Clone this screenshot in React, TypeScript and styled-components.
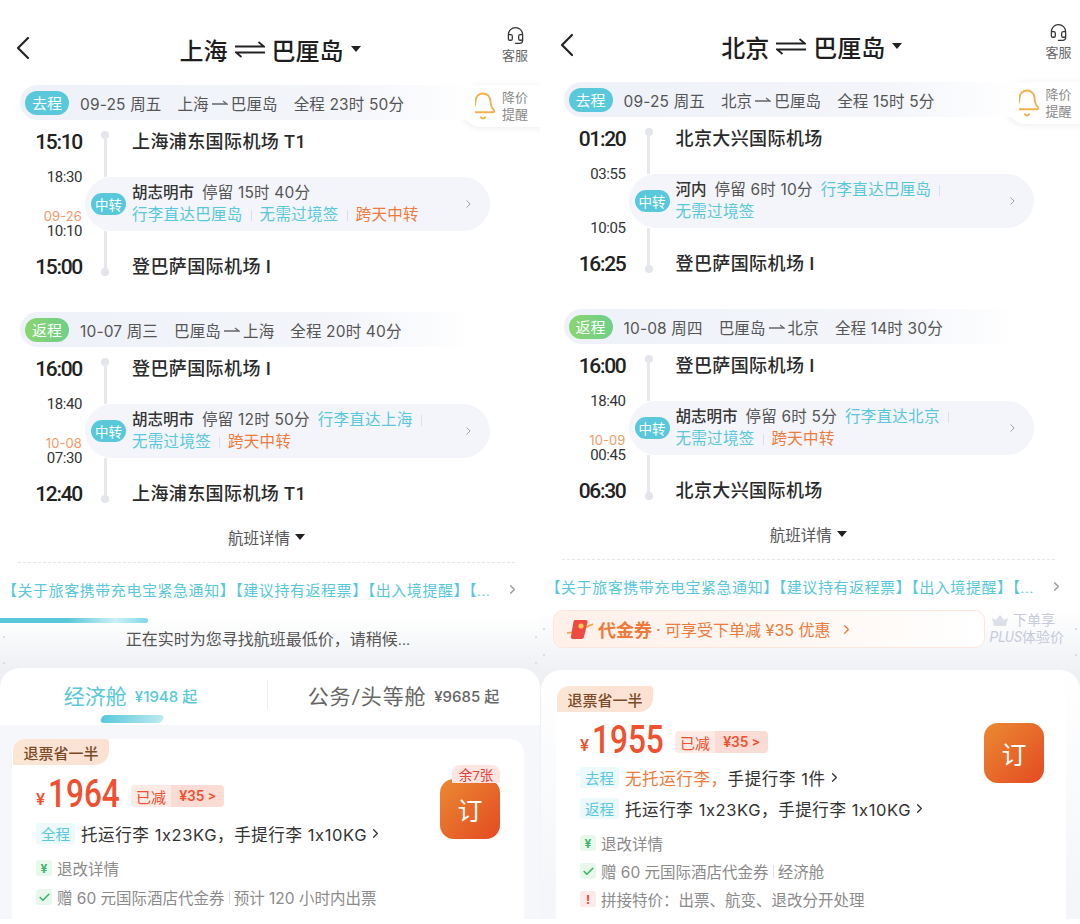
import React from 'react';
import styled, { createGlobalStyle } from 'styled-components';
import { Bell, Check, ChevronLeft, ChevronRight, Headset } from 'lucide-react';

const TEAL = '#58c8da';
const ORANGE = '#ee7a3c';
const RED = '#ee5030';
const WIDE = 'Inter, "Noto Sans CJK SC", sans-serif';

const Global = createGlobalStyle`
  html, body { margin: 0; padding: 0; background: #fff; }
  body { font-family: Roboto, "Noto Sans CJK SC", sans-serif; color: #222; }
`;

const Page = styled.div`
  display: flex;
  width: 1080px;
  height: 919px;
  overflow: hidden;
  background: #fff;
`;

const Screen = styled.div`
  width: 540px;
  height: 919px;
  flex: none;
  overflow: hidden;
  display: flex;
  flex-direction: column;
`;

const Top = styled.div<{ $right?: boolean }>`
  position: relative;
  padding-left: ${p => (p.$right ? 3.5 : 0)}px;
  padding-top: ${p => (p.$right ? 1 : 4)}px;
`;

const Header = styled.div`
  height: 81px;
  position: relative;
  display: flex;
  align-items: center;
  justify-content: center;
  box-sizing: border-box;
`;

const Back = styled.div`
  position: absolute;
  left: 3px;
  top: 24px;
  display: flex;
  color: #222;
`;

const Title = styled.div`
  display: flex;
  align-items: center;
  margin-top: 9px;
  font-size: 24px;
  font-weight: 500;
  color: #1e1e1e;
  gap: 7px;
`;

const Caret = styled.i<{ $size?: number }>`
  display: inline-block;
  width: 0;
  height: 0;
  border-left: ${p => p.$size ?? 5}px solid transparent;
  border-right: ${p => p.$size ?? 5}px solid transparent;
  border-top: ${p => (p.$size ?? 5) + 1}px solid #222;
`;

const Service = styled.div`
  position: absolute;
  left: 502px;
  top: 22px;
  width: 26px;
  display: flex;
  flex-direction: column;
  align-items: center;
  font-size: 13px;
  line-height: 16px;
  color: #666;
  gap: 3px;
`;

const TripList = styled.div`
  position: relative;
`;

const Alert = styled.div`
  position: absolute;
  left: 461px;
  top: 0;
  width: 90px;
  height: 42px;
  padding-left: 7px;
  box-sizing: border-box;
  background: #fff;
  border-radius: 21px 0 0 21px;
  box-shadow: -1px 1px 6px rgba(120, 130, 150, 0.14);
  display: flex;
  align-items: center;
  gap: 4px;
  color: #f3b04f;
`;

const AlertText = styled.div`
  font-size: 13px;
  line-height: 17px;
  color: #8a8a8a;
`;

const Trip = styled.div`
  position: relative;
  margin-bottom: 32px;
  &:last-of-type { margin-bottom: 0; }
`;

const SummaryBar = styled.div`
  margin-left: 20px;
  width: 455px;
  height: 35px;
  box-sizing: border-box;
  padding-left: 5px;
  border-radius: 18px 0 0 18px;
  background: linear-gradient(90deg, #eef1f8 0%, #f3f5fa 70%, #ffffff 100%);
  display: flex;
  align-items: center;
  font-family: ${WIDE};
  font-size: 15.5px;
  letter-spacing: 0.15px;
  color: #555;
  white-space: nowrap;
`;

const Leg = styled.span<{ $back?: boolean }>`
  width: 44px;
  height: 24px;
  border-radius: 12px;
  margin-right: 11px;
  background: ${p => (p.$back ? 'linear-gradient(90deg, #8ad56f, #6fcf8a)' : TEAL)};
  color: #fff;
  font-size: 15px;
  letter-spacing: 0;
  display: flex;
  align-items: center;
  justify-content: center;
`;

const SummaryPart = styled.span`
  margin-right: 16px;
  display: inline-flex;
  align-items: center;
  gap: 3px;
`;

const AirportRow = styled.div<{ $end?: boolean }>`
  display: flex;
  height: ${p => (p.$end ? 46 : 50)}px;
  margin-top: ${p => (p.$end ? 0 : 4)}px;
  align-items: ${p => (p.$end ? 'flex-end' : 'flex-start')};
`;

const Clock = styled.div<{ $end?: boolean }>`
  width: 82px;
  flex: none;
  text-align: right;
  font-size: 21px;
  font-weight: 500;
  letter-spacing: -1.3px;
  line-height: ${p => (p.$end ? 26 : 36)}px;
  color: #222;
`;

const Rail = styled.div<{ $end?: boolean }>`
  width: 46px;
  height: 100%;
  flex: none;
  display: flex;
  flex-direction: ${p => (p.$end ? 'column-reverse' : 'column')};
  align-items: center;
  box-sizing: border-box;
  padding: ${p => (p.$end ? '0 0 4px' : '7px 0 0')};
  &::before {
    content: '';
    width: 8px;
    height: 8px;
    border-radius: 50%;
    background: #e3e5ea;
    flex: none;
  }
  &::after {
    content: '';
    width: 3px;
    flex: 1;
    background: #e6e8ec;
    margin: -3px 0;
  }
`;

const Airport = styled.div<{ $end?: boolean }>`
  margin-left: 4px;
  font-size: 18px;
  font-weight: 500;
  letter-spacing: 0.4px;
  line-height: ${p => (p.$end ? 26 : 36)}px;
  color: #2a2a2a;
`;

const StopRow = styled.div`
  display: flex;
  height: 60px;
  align-items: center;
`;

const StopTimes = styled.div`
  width: 82px;
  height: 70px;
  flex: none;
  display: flex;
  flex-direction: column;
  justify-content: space-between;
  text-align: right;
  font-size: 15px;
  line-height: 16px;
  letter-spacing: -0.4px;
  color: #333;
`;

const StopDate = styled.div`
  font-family: ${WIDE};
  font-size: 13px;
  line-height: 14px;
  letter-spacing: 0.1px;
  color: #f39a68;
`;

const StopPill = styled.div`
  width: 405px;
  height: 54px;
  margin-left: 3px;
  padding-left: 6px;
  box-sizing: border-box;
  border-radius: 27px;
  background: #f4f5fa;
  display: flex;
  align-items: center;
  color: #8f8f8f;
`;

const StopBadge = styled.span`
  width: 35px;
  height: 22px;
  flex: none;
  border-radius: 11px;
  background: ${TEAL};
  color: #fff;
  font-size: 13.5px;
  display: flex;
  align-items: center;
  justify-content: center;
`;

const StopBody = styled.div`
  margin-left: 6px;
  width: 330px;
  flex: none;
  font-size: 15.5px;
  line-height: 22px;
`;

const StopLine = styled.div`
  display: flex;
  align-items: center;
  white-space: nowrap;
  height: 22px;
`;

const City = styled.span`
  font-weight: 500;
  color: #333;
  margin-right: 8px;
`;

const Stay = styled.span`
  font-family: ${WIDE};
  font-size: 15.5px;
  letter-spacing: 0.2px;
  color: #555;
  margin-right: 8px;
`;

const Note = styled.span<{ $warm?: boolean }>`
  color: ${p => (p.$warm ? ORANGE : TEAL)};
  letter-spacing: 0.3px;
`;

const NoteSep = styled.i`
  width: 1px;
  height: 11px;
  margin: 0 8px;
  background: #dcdfe6;
`;

const PillArrow = styled(ChevronRight)`
  margin-left: auto;
  margin-right: 15px;
`;

const FlightDetail = styled.div`
  margin-top: 20px;
  height: 20px;
  display: flex;
  align-items: center;
  justify-content: center;
  gap: 5px;
  padding-right: 7px;
  font-size: 15.5px;
  color: #555;
`;

const Dashed = styled.div`
  margin: 15px 25px 0 18px;
  border-top: 1px dashed #e6e6e6;
`;

const Notice = styled.div`
  margin-top: 16px;
  padding-left: 2px;
  height: 20px;
  display: flex;
  align-items: center;
  font-size: 15px;
  color: ${TEAL};
  white-space: nowrap;
`;

const NoticeText = styled.span`
  width: 500px;
  flex: none;
  letter-spacing: 0.55px;
`;

const NoticeArrow = styled.span`
  color: #999;
  display: flex;
  margin-left: 3px;
`;

const edgeDots = `
  radial-gradient(circle, #dcdfe5 1px, transparent 1.6px) left 1px top 6px / 6px 26px repeat-y,
  radial-gradient(circle, #dcdfe5 1px, transparent 1.6px) right 1px top 6px / 6px 26px repeat-y
`;

const Panel = styled.div<{ $right?: boolean }>`
  flex: 1;
  min-height: 0;
  margin-top: ${p => (p.$right ? 14 : 19)}px;
  padding-left: ${p => (p.$right ? 1 : 0)}px;
  background: ${edgeDots}, linear-gradient(180deg, #ffffff 0, #eef0f4 ${p => (p.$right ? 65 : 50)}px, #f5f6f9 100%);
  display: flex;
  flex-direction: column;
`;

const Progress = styled.div`
  width: 148px;
  height: 5px;
  border-radius: 0 3px 3px 0;
  background: linear-gradient(90deg, #58c8da 0%, #58c8da 45%, #c9f0f5 78%, #7fd9e6 100%);
`;

const Searching = styled.div`
  height: 45px;
  display: flex;
  align-items: flex-start;
  justify-content: center;
  padding: 7px 4px 0 0;
  box-sizing: border-box;
  font-size: 16px;
  line-height: 20px;
  color: #555;
`;

const Tabs = styled.div`
  height: 57px;
  flex: none;
  background: #fff;
  border-radius: 20px 20px 0 0;
  display: flex;
  position: relative;
`;

const Tab = styled.div<{ $on?: boolean }>`
  width: 267px;
  flex: none;
  position: relative;
  display: flex;
  align-items: center;
  justify-content: center;
  gap: 8px;
  height: 54px;
  padding-right: 6px;
  box-sizing: border-box;
  font-size: 21px;
  color: ${p => (p.$on ? TEAL : '#666')};
  & + & {
    border-left: 1px solid #eceef1;
    height: 30px;
    margin-top: 12px;
    padding-right: 0;
    width: 272px;
    letter-spacing: 0.8px;
  }
`;

const TabPrice = styled.span`
  font-family: ${WIDE};
  font-size: 15px;
  font-weight: 500;
  letter-spacing: 0;
`;

const TabBar = styled.i`
  position: absolute;
  left: 101px;
  bottom: -1px;
  width: 62px;
  height: 8px;
  border-radius: 4px;
  transform: skewX(-20deg);
  background: linear-gradient(90deg, #58c8da, #bdeaf1);
`;

const FareArea = styled.div`
  flex: 1;
  background: #f6f7fa;
  padding: 13px 16px 0 12px;
`;

const FareShell = styled.div`
  flex: 1;
  margin-top: 22px;
  border-radius: 20px 20px 0 0;
  background: linear-gradient(180deg, #ffffff 0, #f4f6f9 220px);
  padding: 15px 14px 0 15px;
  display: flex;
`;

const FareCard = styled.div`
  flex: 1;
  height: 100%;
  background: #fff;
  border-radius: 14px 14px 0 0;
  position: relative;
`;

const Perk = styled.div`
  width: 96px;
  height: 26px;
  margin: 1px 0 0 1px;
  border-radius: 12px 3px 14px 0;
  background: linear-gradient(90deg, #fbe6d6, #fce1d3);
  color: #7b4a26;
  font-size: 15px;
  font-weight: 500;
  display: flex;
  align-items: center;
  justify-content: center;
`;

const FareBody = styled.div<{ $right?: boolean }>`
  display: flex;
  justify-content: space-between;
  padding: ${p => (p.$right ? 10 : 11)}px ${p => (p.$right ? 22 : 24)}px 0 24px;
`;

const FareMain = styled.div`
  display: flex;
  flex-direction: column;
`;

const PriceRow = styled.div`
  height: 36px;
  display: flex;
  align-items: center;
  color: ${RED};
`;

const Yen = styled.span`
  font-size: 17px;
  margin: 9px 3px 0 0;
  font-weight: 500;
`;

const Amount = styled.span`
  width: 72px;
  flex: none;
  font-size: 39px;
  line-height: 36px;
  font-weight: 500;
  transform: scaleX(0.81);
  transform-origin: left center;
`;

const Saved = styled.div`
  margin: 4px 0 0 11px;
  height: 22px;
  display: flex;
  font-size: 15px;
  border-radius: 4px;
  overflow: hidden;
`;

const SavedLabel = styled.span`
  width: 40px;
  background: #fdeae5;
  display: flex;
  align-items: center;
  justify-content: center;
`;

const SavedValue = styled.span`
  width: 53px;
  background: #fbdcd5;
  display: flex;
  align-items: center;
  justify-content: center;
  font-weight: 500;
`;

const BagRows = styled.div<{ $right?: boolean }>`
  margin-top: ${p => (p.$right ? 9 : 11)}px;
  display: flex;
  flex-direction: column;
  gap: 10px;
`;

const BagRow = styled.div`
  height: 21px;
  display: flex;
  align-items: center;
  font-family: ${WIDE};
  font-size: 16.5px;
  letter-spacing: 0.6px;
  color: #333;
  white-space: nowrap;
`;

const BagTag = styled.span`
  width: 39px;
  height: 21px;
  margin-right: 6px;
  border-radius: 3px;
  background: #edfafc;
  color: ${TEAL};
  font-size: 14.5px;
  letter-spacing: 0;
  display: flex;
  align-items: center;
  justify-content: center;
`;

const BagArrow = styled(ChevronRight)`
  margin-left: 1px;
`;

const Warm = styled.span`
  color: ${ORANGE};
`;

const Services = styled.div<{ $right?: boolean }>`
  margin-top: 14px;
  display: flex;
  flex-direction: column;
  gap: ${p => (p.$right ? 8 : 9)}px;
`;

const ServiceRow = styled.div`
  height: 20px;
  display: flex;
  align-items: center;
  font-family: ${WIDE};
  font-size: 15.5px;
  color: #8b8b8b;
  white-space: nowrap;
`;

const ServiceMark = styled.span<{ $tone: 'green' | 'red' }>`
  width: 16px;
  height: 16px;
  margin-right: 5px;
  border-radius: 3px;
  background: ${p => (p.$tone === 'green' ? '#e8f8ec' : '#fdeaea')};
  color: ${p => (p.$tone === 'green' ? '#3cb56a' : '#e8433a')};
  font-size: 12px;
  font-weight: 700;
  display: flex;
  align-items: center;
  justify-content: center;
`;

const ServiceSep = styled.i`
  width: 1px;
  height: 13px;
  margin: 0 4px;
  background: #dfe1e6;
`;

const BookBox = styled.div<{ $right?: boolean }>`
  position: relative;
  width: 60px;
  height: 60px;
  margin-top: ${p => (p.$right ? 1 : 3)}px;
  flex: none;
`;

const Book = styled.div`
  width: 60px;
  height: 60px;
  border-radius: 14px;
  background: linear-gradient(135deg, #ea8a32 0%, #e44a22 100%);
  color: #fff;
  font-size: 25px;
  display: flex;
  align-items: center;
  justify-content: center;
`;

const SeatsLeft = styled.span`
  position: absolute;
  top: -14px;
  right: 0;
  width: 48px;
  height: 18px;
  border-radius: 8px 8px 0 0;
  background: #fde6e2;
  color: #e8433a;
  font-size: 13.5px;
  display: flex;
  align-items: center;
  justify-content: center;
`;

const CouponRow = styled.div`
  display: flex;
  align-items: center;
  height: 38px;
  padding-left: 12px;
`;

const Coupon = styled.div`
  width: 432px;
  height: 38px;
  flex: none;
  box-sizing: border-box;
  border: 1px solid #fbe6dd;
  border-radius: 10px;
  background: linear-gradient(90deg, #fff0e9, #fff8f4 60%, #ffffff);
  display: flex;
  align-items: center;
  padding-left: 12px;
  color: ${ORANGE};
  font-family: ${WIDE};
  font-size: 16px;
  white-space: nowrap;
`;

const CouponName = styled.span`
  font-size: 18px;
  font-weight: 700;
  margin: 0 4px 0 4px;
`;

const CouponArrow = styled(ChevronRight)`
  margin-left: 8px;
`;

const PlusNote = styled.div`
  margin-left: 3px;
  width: 76px;
  flex: none;
  color: #c7cad8;
  font-size: 14px;
  line-height: 17px;
  text-align: right;
  white-space: nowrap;
`;

const PlusTop = styled.div`
  display: flex;
  align-items: center;
  justify-content: flex-end;
  gap: 4px;
  padding-right: 9px;
`;

const PlusLabel = styled.em`
  font-style: italic;
`;

type StopNote = { text: string; warm?: boolean; sep?: boolean };

type TripData = {
  back?: boolean;
  date: string;
  from: string;
  to: string;
  total: string;
  depart: string;
  departAirport: string;
  stopIn: string;
  stopDate?: string;
  stopOut: string;
  city: string;
  stay: string;
  first: StopNote[];
  second: StopNote[];
  arrive: string;
  arriveAirport: string;
};

const leftTrips: TripData[] = [
  {
    date: '09-25 周五', from: '上海', to: '巴厘岛', total: '全程 23时 50分',
    depart: '15:10', departAirport: '上海浦东国际机场 T1',
    stopIn: '18:30', stopDate: '09-26', stopOut: '10:10',
    city: '胡志明市', stay: '停留 15时 40分', first: [],
    second: [{ text: '行李直达巴厘岛', sep: true }, { text: '无需过境签', sep: true }, { text: '跨天中转', warm: true }],
    arrive: '15:00', arriveAirport: '登巴萨国际机场 I',
  },
  {
    back: true,
    date: '10-07 周三', from: '巴厘岛', to: '上海', total: '全程 20时 40分',
    depart: '16:00', departAirport: '登巴萨国际机场 I',
    stopIn: '18:40', stopDate: '10-08', stopOut: '07:30',
    city: '胡志明市', stay: '停留 12时 50分', first: [{ text: '行李直达上海', sep: true }],
    second: [{ text: '无需过境签', sep: true }, { text: '跨天中转', warm: true }],
    arrive: '12:40', arriveAirport: '上海浦东国际机场 T1',
  },
];

const rightTrips: TripData[] = [
  {
    date: '09-25 周五', from: '北京', to: '巴厘岛', total: '全程 15时 5分',
    depart: '01:20', departAirport: '北京大兴国际机场',
    stopIn: '03:55', stopOut: '10:05',
    city: '河内', stay: '停留 6时 10分', first: [{ text: '行李直达巴厘岛', sep: true }],
    second: [{ text: '无需过境签' }],
    arrive: '16:25', arriveAirport: '登巴萨国际机场 I',
  },
  {
    back: true,
    date: '10-08 周四', from: '巴厘岛', to: '北京', total: '全程 14时 30分',
    depart: '16:00', departAirport: '登巴萨国际机场 I',
    stopIn: '18:40', stopDate: '10-09', stopOut: '00:45',
    city: '胡志明市', stay: '停留 6时 5分', first: [{ text: '行李直达北京', sep: true }],
    second: [{ text: '无需过境签', sep: true }, { text: '跨天中转', warm: true }],
    arrive: '06:30', arriveAirport: '北京大兴国际机场',
  },
];

const RoundArrows = () => (
  <svg width="30" height="18" viewBox="0 0 30 18" fill="none" stroke="#222" strokeWidth="1.8">
    <path d="M0 6.5h29L23.5 2" />
    <path d="M30 12.5H1l5.5 4.5" />
  </svg>
);

const OneWay = () => (
  <svg width="16" height="8" viewBox="0 0 16 8" fill="none" stroke="#666" strokeWidth="1.3">
    <path d="M0 5h15L11 2" />
  </svg>
);

const CouponIcon = () => (
  <svg width="28" height="24" viewBox="0 0 28 24">
    <path d="M1 16c6 0 18-5 26-9" stroke="#f2a23c" strokeWidth="1.6" fill="none" />
    <path d="M9 3h11c1 0 2 1 1.6 2L18 20c-.3 1-1.2 2-2.4 2H7c-1.5 0-2.4-1-2-2.4L7.4 5C7.7 4 8 3 9 3z" fill="#ee4a44" />
    <circle cx="15" cy="9" r="2.6" fill="#f8c85a" />
  </svg>
);

const Crown = () => (
  <svg width="18" height="13" viewBox="0 0 18 13" fill="#dcdee8">
    <path d="M1 4l4 2 4-5 4 5 4-2-2 8H3z" />
  </svg>
);

const NoteList = ({ notes }: { notes: StopNote[] }) => (
  <>
    {notes.map(n => (
      <React.Fragment key={n.text}>
        <Note $warm={n.warm}>{n.text}</Note>
        {n.sep && <NoteSep />}
      </React.Fragment>
    ))}
  </>
);

const TripBlock = ({ trip }: { trip: TripData }) => (
  <Trip>
    <SummaryBar>
      <Leg $back={trip.back}>{trip.back ? '返程' : '去程'}</Leg>
      <SummaryPart>{trip.date}</SummaryPart>
      <SummaryPart>
        {trip.from}
        <OneWay />
        {trip.to}
      </SummaryPart>
      <SummaryPart>{trip.total}</SummaryPart>
    </SummaryBar>
    <AirportRow>
      <Clock>{trip.depart}</Clock>
      <Rail />
      <Airport>{trip.departAirport}</Airport>
    </AirportRow>
    <StopRow>
      <StopTimes>
        <div>{trip.stopIn}</div>
        <div>
          {trip.stopDate && <StopDate>{trip.stopDate}</StopDate>}
          {trip.stopOut}
        </div>
      </StopTimes>
      <StopPill>
        <StopBadge>中转</StopBadge>
        <StopBody>
          <StopLine>
            <City>{trip.city}</City>
            <Stay>{trip.stay}</Stay>
            <NoteList notes={trip.first} />
          </StopLine>
          <StopLine>
            <NoteList notes={trip.second} />
          </StopLine>
        </StopBody>
        <PillArrow size={18} strokeWidth={1.6} />
      </StopPill>
    </StopRow>
    <AirportRow $end>
      <Clock $end>{trip.arrive}</Clock>
      <Rail $end />
      <Airport $end>{trip.arriveAirport}</Airport>
    </AirportRow>
  </Trip>
);

const TopPart = ({ title, trips, right }: { title: [string, string]; trips: TripData[]; right?: boolean }) => (
  <Top $right={right}>
    <Header>
      <Back>
        <ChevronLeft size={40} strokeWidth={1.3} />
      </Back>
      <Title>
        {title[0]}
        <RoundArrows />
        {title[1]}
        <Caret />
      </Title>
      <Service>
        <Headset size={19} strokeWidth={1.6} color="#333" />
        客服
      </Service>
    </Header>
    <TripList>
      <Alert>
        <Bell size={30} strokeWidth={1.5} />
        <AlertText>
          降价
          <br />
          提醒
        </AlertText>
      </Alert>
      {trips.map(t => (
        <TripBlock key={t.date} trip={t} />
      ))}
    </TripList>
    <FlightDetail>
      航班详情
      <Caret $size={5} />
    </FlightDetail>
    <Dashed />
    <Notice>
      <NoticeText>【关于旅客携带充电宝紧急通知】【建议持有返程票】【出入境提醒】【...</NoticeText>
      <NoticeArrow>
        <ChevronRight size={15} />
      </NoticeArrow>
    </Notice>
  </Top>
);

const FareContent = ({
  amount,
  seats,
  bags,
  extra,
  right,
}: {
  amount: string;
  seats?: string;
  bags: React.ReactNode;
  extra: React.ReactNode;
  right?: boolean;
}) => (
  <FareCard>
    <Perk>退票省一半</Perk>
    <FareBody $right={right}>
      <FareMain>
        <PriceRow>
          <Yen>¥</Yen>
          <Amount>{amount}</Amount>
          <Saved>
            <SavedLabel>已减</SavedLabel>
            <SavedValue>¥35 &gt;</SavedValue>
          </Saved>
        </PriceRow>
        <BagRows $right={right}>{bags}</BagRows>
        <Services $right={right}>{extra}</Services>
      </FareMain>
      <BookBox $right={right}>
        {seats && <SeatsLeft>{seats}</SeatsLeft>}
        <Book>订</Book>
      </BookBox>
    </FareBody>
  </FareCard>
);

const RefundRow = () => (
  <ServiceRow>
    <ServiceMark $tone="green">¥</ServiceMark>
    退改详情
  </ServiceRow>
);

const TickMark = () => (
  <ServiceMark $tone="green">
    <Check size={13} strokeWidth={3} />
  </ServiceMark>
);

export default function App() {
  return (
    <Page>
      <Global />
      <Screen>
        <TopPart title={['上海', '巴厘岛']} trips={leftTrips} />
        <Panel>
          <Progress />
          <Searching>正在实时为您寻找航班最低价，请稍候...</Searching>
          <Tabs>
            <Tab $on>
              经济舱 <TabPrice>¥1948 起</TabPrice>
              <TabBar />
            </Tab>
            <Tab>
              公务/头等舱 <TabPrice>¥9685 起</TabPrice>
            </Tab>
          </Tabs>
          <FareArea>
            <FareContent
              amount="1964"
              seats="余7张"
              bags={
                <BagRow>
                  <BagTag>全程</BagTag>
                  托运行李 1x23KG，手提行李 1x10KG
                  <BagArrow size={15} strokeWidth={2} />
                </BagRow>
              }
              extra={
                <>
                  <RefundRow />
                  <ServiceRow>
                    <TickMark />
                    赠 60 元国际酒店代金券
                    <ServiceSep />
                    预计 120 小时内出票
                  </ServiceRow>
                </>
              }
            />
          </FareArea>
        </Panel>
      </Screen>
      <Screen>
        <TopPart title={['北京', '巴厘岛']} trips={rightTrips} right />
        <Panel $right>
          <CouponRow>
            <Coupon>
              <CouponIcon />
              <CouponName>代金券</CouponName>· 可享受下单减 ¥35 优惠
              <CouponArrow size={15} />
            </Coupon>
            <PlusNote>
              <PlusTop>
                <Crown />
                下单享
              </PlusTop>
              <PlusLabel>PLUS</PlusLabel>体验价
            </PlusNote>
          </CouponRow>
          <FareShell>
            <FareContent
              right
              amount="1955"
              bags={
                <>
                  <BagRow>
                    <BagTag>去程</BagTag>
                    <Warm>无托运行李，</Warm>手提行李 1件
                    <BagArrow size={15} strokeWidth={2} />
                  </BagRow>
                  <BagRow>
                    <BagTag>返程</BagTag>
                    托运行李 1x23KG，手提行李 1x10KG
                    <BagArrow size={15} strokeWidth={2} />
                  </BagRow>
                </>
              }
              extra={
                <>
                  <RefundRow />
                  <ServiceRow>
                    <TickMark />
                    赠 60 元国际酒店代金券
                    <ServiceSep />
                    经济舱
                  </ServiceRow>
                  <ServiceRow>
                    <ServiceMark $tone="red">!</ServiceMark>
                    拼接特价：出票、航变、退改分开处理
                  </ServiceRow>
                </>
              }
            />
          </FareShell>
        </Panel>
      </Screen>
    </Page>
  );
}
